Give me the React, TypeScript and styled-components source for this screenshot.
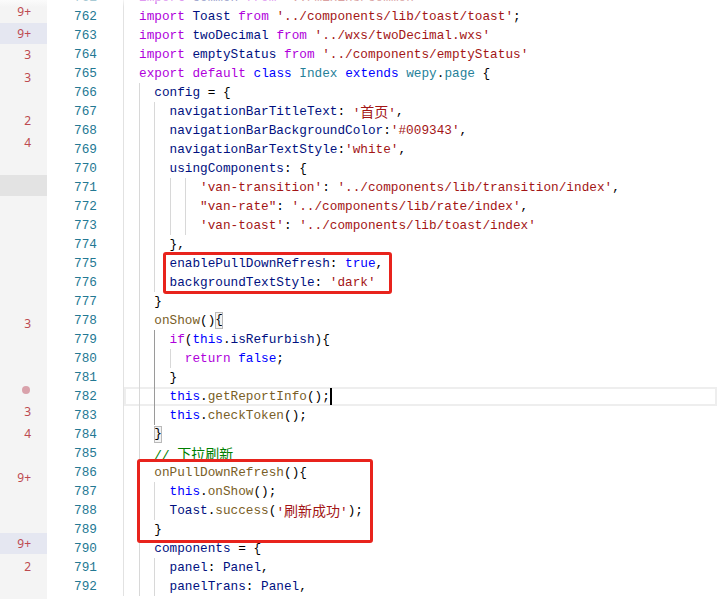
import React from 'react';
import styled, { createGlobalStyle, css } from 'styled-components';

const GlobalStyle = createGlobalStyle`
  html, body {
    margin: 0;
    padding: 0;
    background: #ffffff;
  }
`;

const tones = {
  kw: '#af00db',
  blue: '#0000ff',
  str: '#a31515',
  var: '#001080',
  fn: '#795e26',
  type: '#267f99',
  punct: '#000000',
  comment: '#008000',
};

type Tone = keyof typeof tones;
type Seg = [string, Tone, 'match'?];

type Line = {
  n: number;
  indent: number;
  segs: Seg[];
  activeGuide?: number;
  current?: boolean;
};

const L = (n: number, indent: number, segs: Seg[], extra: Partial<Line> = {}): Line => ({
  n,
  indent,
  segs,
  ...extra,
});

const lines: Line[] = [
  L(761, 0, [['import', 'kw'], [' common ', 'var'], ['from', 'kw'], [' ', 'punct'], ["'../mixins/common'", 'str']]),
  L(762, 0, [['import', 'kw'], [' Toast ', 'var'], ['from', 'kw'], [' ', 'punct'], ["'../components/lib/toast/toast'", 'str'], [';', 'punct']]),
  L(763, 0, [['import', 'kw'], [' twoDecimal ', 'var'], ['from', 'kw'], [' ', 'punct'], ["'../wxs/twoDecimal.wxs'", 'str']]),
  L(764, 0, [['import', 'kw'], [' emptyStatus ', 'var'], ['from', 'kw'], [' ', 'punct'], ["'../components/emptyStatus'", 'str']]),
  L(765, 0, [
    ['export default', 'kw'], [' ', 'punct'], ['class', 'blue'], [' ', 'punct'], ['Index', 'type'], [' ', 'punct'],
    ['extends', 'blue'], [' ', 'punct'], ['wepy', 'type'], ['.', 'punct'], ['page', 'type'], [' {', 'punct'],
  ]),
  L(766, 1, [['config', 'var'], [' = {', 'punct']]),
  L(767, 2, [['navigationBarTitleText', 'var'], [': ', 'punct'], ["'首页'", 'str'], [',', 'punct']]),
  L(768, 2, [['navigationBarBackgroundColor', 'var'], [':', 'punct'], ["'#009343'", 'str'], [',', 'punct']]),
  L(769, 2, [['navigationBarTextStyle', 'var'], [':', 'punct'], ["'white'", 'str'], [',', 'punct']]),
  L(770, 2, [['usingComponents', 'var'], [': {', 'punct']]),
  L(771, 4, [["'van-transition'", 'str'], [': ', 'punct'], ["'../components/lib/transition/index'", 'str'], [',', 'punct']]),
  L(772, 4, [['"van-rate"', 'str'], [': ', 'punct'], ["'../components/lib/rate/index'", 'str'], [',', 'punct']]),
  L(773, 4, [["'van-toast'", 'str'], [': ', 'punct'], ["'../components/lib/toast/index'", 'str']]),
  L(774, 2, [['},', 'punct']]),
  L(775, 2, [['enablePullDownRefresh', 'var'], [': ', 'punct'], ['true', 'blue'], [',', 'punct']]),
  L(776, 2, [['backgroundTextStyle', 'var'], [': ', 'punct'], ["'dark'", 'str']]),
  L(777, 1, [['}', 'punct']]),
  L(778, 1, [['onShow', 'fn'], ['()', 'punct'], ['{', 'punct', 'match']]),
  L(779, 2, [['if', 'kw'], ['(', 'punct'], ['this', 'blue'], ['.', 'punct'], ['isRefurbish', 'var'], ['){', 'punct']], { activeGuide: 1 }),
  L(780, 3, [['return', 'kw'], [' ', 'punct'], ['false', 'blue'], [';', 'punct']], { activeGuide: 1 }),
  L(781, 2, [['}', 'punct']], { activeGuide: 1 }),
  L(782, 2, [['this', 'blue'], ['.', 'punct'], ['getReportInfo', 'fn'], ['();', 'punct']], { activeGuide: 1, current: true }),
  L(783, 2, [['this', 'blue'], ['.', 'punct'], ['checkToken', 'fn'], ['();', 'punct']], { activeGuide: 1 }),
  L(784, 1, [['}', 'punct', 'match']]),
  L(785, 1, [['// 下拉刷新', 'comment']]),
  L(786, 1, [['onPullDownRefresh', 'fn'], ['(){', 'punct']]),
  L(787, 2, [['this', 'blue'], ['.', 'punct'], ['onShow', 'fn'], ['();', 'punct']]),
  L(788, 2, [['Toast', 'var'], ['.', 'punct'], ['success', 'fn'], ['(', 'punct'], ["'刷新成功'", 'str'], [');', 'punct']]),
  L(789, 1, [['}', 'punct']]),
  L(790, 1, [['components', 'var'], [' = {', 'punct']]),
  L(791, 2, [['panel', 'var'], [': ', 'punct'], ['Panel', 'var'], [',', 'punct']]),
  L(792, 2, [['panelTrans', 'var'], [': ', 'punct'], ['Panel', 'var'], [',', 'punct']]),
];

// change markers in the left strip; they do not line up with the code rows
type Marker = { y: number; text?: string; band?: 'blue' | 'gray'; dot?: boolean };

const markers: Marker[] = [
  { y: 11, text: '9+' },
  { y: 33, text: '9+', band: 'blue' },
  { y: 54, text: '3' },
  { y: 77, text: '3' },
  { y: 120, text: '2' },
  { y: 142, text: '4' },
  { y: 185, band: 'gray' },
  { y: 323, text: '3' },
  { y: 389, dot: true },
  { y: 411, text: '3' },
  { y: 433, text: '4' },
  { y: 477, text: '9+' },
  { y: 543, text: '9+', band: 'blue' },
  { y: 566, text: '2' },
];

const MARK_H = 21;

const Page = styled.div`
  position: relative;
  display: flex;
  width: 717px;
  height: 599px;
  overflow: hidden;
  background: #ffffff;
`;

const Strip = styled.div`
  display: flex;
  flex-direction: column;
  width: 47px;
  flex-shrink: 0;
  background: #f4f4f4;
`;

const MarkRow = styled.div<{ $gap: number; $band?: 'blue' | 'gray' }>`
  display: flex;
  align-items: center;
  justify-content: flex-end;
  height: ${MARK_H}px;
  margin-top: ${(p) => p.$gap}px;
  padding-right: 16px;
  font-family: 'Noto Sans', 'Liberation Sans', sans-serif;
  font-size: 12px;
  color: #bd4a50;
  ${(p) =>
    p.$band === 'blue' &&
    css`
      background: #e5e7f1;
    `}
  ${(p) =>
    p.$band === 'gray' &&
    css`
      background: #e3e3e3;
    `}
`;

const Dot = styled.span`
  width: 8px;
  height: 8px;
  margin-right: 1px;
  border-radius: 50%;
  background: #d9a2ab;
`;

const Editor = styled.div`
  flex: 1;
  display: flex;
  flex-direction: column;
  margin-top: -12px;
  font-family: 'Liberation Mono', 'DejaVu Sans Mono', monospace;
  font-size: 12.73px;
  line-height: 19px;
`;

const Row = styled.div`
  display: flex;
  height: 19px;
  flex-shrink: 0;
`;

const LineNo = styled.div`
  width: 76px;
  flex-shrink: 0;
  box-sizing: border-box;
  padding-right: 26px;
  text-align: right;
  color: #237893;
`;

const Code = styled.div<{ $current?: boolean }>`
  flex: 1;
  display: flex;
  align-items: stretch;
  padding-left: 15px;
  border-left: 1px solid #e2e2e2;
  white-space: pre;
  ${(p) =>
    p.$current &&
    css`
      box-shadow: inset 0 0 0 2px #eeeeee;
    `}
`;

const Guide = styled.span<{ $active?: boolean }>`
  display: inline-block;
  width: 2ch;
  flex-shrink: 0;
  box-sizing: border-box;
  border-left: 1px solid ${(p) => (p.$active ? '#9a9a9a' : '#d8d8d8')};
`;

const Tok = styled.span<{ $tone: Tone }>`
  color: ${(p) => tones[p.$tone]};
`;

const Match = styled.span`
  box-sizing: border-box;
  height: 17px;
  margin-top: 1px;
  line-height: 15px;
  outline: 1px solid #b9b9b9;
  outline-offset: -1px;
  background: #f3f3f3;
`;

const Cjk = styled.span`
  font-family: 'Noto Sans CJK SC', sans-serif;
  font-size: 14px;
`;

const Cursor = styled.span`
  width: 2px;
  height: 17px;
  margin-top: 1px;
  background: #000000;
`;

const Callout = styled.div<{ $x: number; $y: number; $w: number; $h: number }>`
  position: absolute;
  left: ${(p) => p.$x}px;
  top: ${(p) => p.$y}px;
  width: ${(p) => p.$w}px;
  height: ${(p) => p.$h}px;
  box-sizing: border-box;
  border: 3px solid #e8231c;
  border-radius: 3px;
  pointer-events: none;
`;

const TopFade = styled.div`
  position: absolute;
  left: 0;
  top: 0;
  right: 0;
  height: 7px;
  background: linear-gradient(rgba(255, 255, 255, 0.65), rgba(255, 255, 255, 0));
  pointer-events: none;
`;

const withCjk = (text: string) =>
  text.split(/([\u4e00-\u9fff]+)/).map((part, i) =>
    /[\u4e00-\u9fff]/.test(part) ? <Cjk key={i}>{part}</Cjk> : part
  );

const CodeLine = ({ line }: { line: Line }) => (
  <Row>
    <LineNo>{line.n}</LineNo>
    <Code $current={line.current}>
      {Array.from({ length: line.indent }, (_, i) => (
        <Guide key={i} $active={line.activeGuide === i} />
      ))}
      {line.segs.map(([text, tone, flag], i) =>
        flag === 'match' ? (
          <Match key={i}>
            <Tok $tone={tone}>{text}</Tok>
          </Match>
        ) : (
          <Tok key={i} $tone={tone}>
            {withCjk(text)}
          </Tok>
        )
      )}
      {line.current && <Cursor />}
    </Code>
  </Row>
);

const Markers = () => {
  let bottom = 0;
  return (
    <Strip>
      {markers.map((m, i) => {
        const top = Math.round(m.y - MARK_H / 2);
        const gap = top - bottom;
        bottom = top + MARK_H;
        return (
          <MarkRow key={i} $gap={gap} $band={m.band}>
            {m.dot ? <Dot /> : m.text}
          </MarkRow>
        );
      })}
    </Strip>
  );
};

export default function App() {
  return (
    <>
      <GlobalStyle />
      <Page>
        <Markers />
        <Editor>
          {lines.map((line) => (
            <CodeLine key={line.n} line={line} />
          ))}
        </Editor>
        <Callout $x={163} $y={252} $w={229} $h={42} />
        <Callout $x={137} $y={459} $w={236} $h={84} />
        <TopFade />
      </Page>
    </>
  );
}
